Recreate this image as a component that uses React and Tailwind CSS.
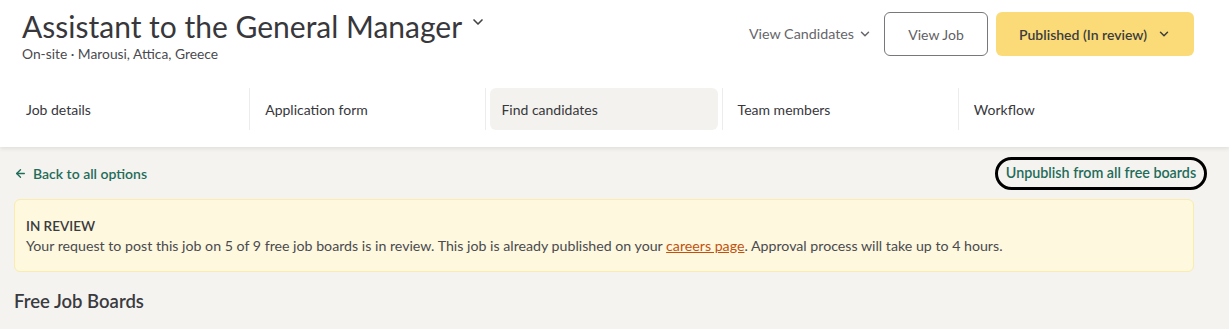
import { ChevronDown, ArrowLeft } from 'lucide-react';

const TABS = ['Job details', 'Application form', 'Find candidates', 'Team members', 'Workflow'];

export default function App() {
  const active = 'Find candidates';

  return (
    <div className="min-h-[329px] bg-[#f4f3ef] font-['Lato','Open_Sans',sans-serif] text-[#3c3c41]">
      <header className="bg-white shadow-[0_2px_4px_rgba(0,0,0,0.08)] px-[14px] h-[147px]">
        <div className="flex items-start justify-between pt-[11px] pl-[8px] pr-[21px] h-[76px]">
          <div>
            <h1 className="flex items-center gap-[8px] text-[30px] leading-[30px] text-[#37373c]">
              Assistant to the General Manager
              <ChevronDown size={16} strokeWidth={2.5} className="-mt-[8px] text-[#444]" />
            </h1>
            <p className="mt-[4px] text-[13.8px] leading-[18px] text-[#4a4a4f]">On-site · Marousi, Attica, Greece</p>
          </div>
          <div className="flex items-center pt-[1px]">
            <button className="flex items-center gap-[4px] text-[14.3px] text-[#66666b] mr-[12px]">
              View Candidates
              <ChevronDown size={14} strokeWidth={2.5} />
            </button>
            <button className="h-[44px] w-[104px] rounded-[6px] border border-[#77777c] text-[14px] text-[#5f5f64] bg-white">
              View Job
            </button>
            <button className="ml-[8px] h-[44px] w-[198px] rounded-[6px] bg-[#fadb77] flex items-center justify-center gap-[10px] text-[14px] font-semibold text-[#3d3d40]">
              Published (In review)
              <ChevronDown size={14} strokeWidth={2.5} />
            </button>
          </div>
        </div>
        <nav className="flex pr-[21px] h-[54px] pt-[12px]">
          {TABS.map((tab, i) => (
            <div key={tab} className={`flex-1 flex items-center h-[42px] ${i > 0 ? 'border-l border-[#ececec]' : ''}`}>
              <div className={`flex-1 mx-[4px] h-[42px] flex items-center rounded-[6px] text-[14px] text-[#37373c] ${tab === active ? 'bg-[#f3f2ee] pl-[11px]' : i === 0 ? 'pl-[8px]' : 'pl-[11px]'}`}>
                {tab}
              </div>
            </div>
          ))}
        </nav>
      </header>

      <main className="px-[14px] pt-[10px]">
        <div className="flex items-center justify-between h-[32px]">
          <a className="flex items-center gap-[6px] text-[14px] font-semibold text-[#1f6c5a]">
            <ArrowLeft size={13} strokeWidth={2.5} />
            Back to all options
          </a>
          <button className="h-[33px] w-[212px] rounded-full border-[3px] border-black text-[14.3px] font-semibold text-[#1f6c5a] mr-[8px]">
            Unpublish from all free boards
          </button>
        </div>

        <div className="mt-[10px] mr-[21px] h-[73px] rounded-[6px] border border-[#f9ecae] bg-[#fdf8de] px-[11px] pt-[17px] text-[14.2px] leading-[19px]">
          <p className="font-semibold text-[#3a3a3f] uppercase text-[13.5px]">In review</p>
          <p className="text-[#4a4a4f]">
            Your request to post this job on 5 of 9 free job boards is in review. This job is already published on your{' '}
            <a className="text-[#c2510f] underline">careers page</a>. Approval process will take up to 4 hours.
          </p>
        </div>

        <h2 className="mt-[17px] text-[18.5px] leading-[24px] font-semibold text-[#3a3a3f]">Free Job Boards</h2>
      </main>
    </div>
  );
}
